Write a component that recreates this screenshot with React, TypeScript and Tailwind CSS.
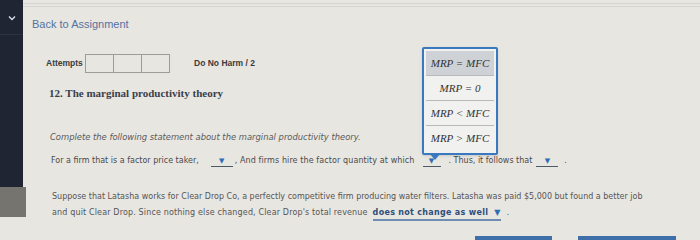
import React from 'react';

const sans = { fontFamily: '"DejaVu Sans", Verdana, sans-serif' };

const Blank = ({ w = 'w-[22px]' }: { w?: string }) => (
  <span className={`inline-flex ${w} h-[10px] items-end justify-center border-b border-[#4d5a6a] align-baseline mx-[2px]`}>
    <span className="text-[#2f6db5] text-[7px] leading-none mb-[1px]">▼</span>
  </span>
);

const options = ['MRP = MFC', 'MRP = 0', 'MRP < MFC', 'MRP > MFC'];

const App = () => {
  return (
    <div className="w-[700px] h-[240px] flex overflow-hidden bg-[#e8e6e1]">
      <aside className="w-[23px] flex flex-col shrink-0">
        <div className="h-[187px] bg-[#1f2532] flex flex-col">
          <div className="h-[35px] border-b border-[#2c3444] flex items-start justify-center pt-[15px]">
            <svg width="8" height="6" viewBox="0 0 8 6" fill="none" stroke="#d8dde6" strokeWidth="1.4">
              <path d="M1 1.5 L4 4.5 L7 1.5" />
            </svg>
          </div>
        </div>
        <div className="h-[30px] w-[26px] bg-[#76746f]" />
      </aside>

      <main className="flex-1 relative pt-[3px]">
        <div className="h-[4px] border-t border-b border-[#d6d5d1]" />
        <div className="pl-[9px] pt-[9px] text-[11px] text-[#54729f]" style={{ fontFamily: '"Liberation Sans", Arial, sans-serif' }}>
          Back to Assignment
        </div>

        <div className="pl-[23px] mt-[21px] flex items-center" style={{ fontFamily: '"Liberation Sans", Arial, sans-serif' }}>
          <span className="text-[8.5px] font-semibold text-[#3b3b3b] w-[39px]">Attempts</span>
          <div className="flex border border-[#9c9c9a] h-[19px]">
            <div className="w-[28px] border-r border-[#9c9c9a]" />
            <div className="w-[28px] border-r border-[#9c9c9a]" />
            <div className="w-[27px]" />
          </div>
          <span className="ml-[24px] text-[8.5px] font-semibold text-[#3b3b3b]">Do No Harm / 2</span>
        </div>

        <div className="pl-[26px] mt-[12px] text-[11px] font-bold text-[#3a3f4a]" style={{ fontFamily: '"Liberation Serif", Georgia, serif' }}>
          12. The marginal productivity theory
        </div>

        <div className="pl-[27px] mt-[30px] text-[8.4px] italic text-[#5a5a5a]" style={sans}>
          Complete the following statement about the marginal productivity theory.
        </div>

        <div className="pl-[28px] mt-[11px] text-[8px] text-[#4a4a4a] flex items-end" style={sans}>
          <span>For a firm that is a factor price taker,</span>
          <span className="ml-[10px]"><Blank /></span>
          <span className="tracking-[0.1px]">, And firms hire the factor quantity at which</span>
          <span className="ml-[6px]"><Blank w="w-[18px]" /></span>
          <span className="ml-[6px]">. Thus, it follows that</span>
          <span className="ml-[2px]"><Blank /></span>
          <span className="ml-[4px]">.</span>
        </div>

        <div className="pl-[29px] mt-[22px] text-[8px] leading-[16px] text-[#555]" style={sans}>
          <div>Suppose that Latasha works for Clear Drop Co, a perfectly competitive firm producing water filters. Latasha was paid $5,000 but found a better job</div>
          <div className="flex items-end">
            <span className="tracking-[0.15px]">and quit Clear Drop. Since nothing else changed, Clear Drop&apos;s total revenue</span>
            <span className="ml-[5px] inline-flex items-center gap-[6px] border-b-2 border-[#6f8cb3] font-bold text-[#2d4e7c] leading-[12px] tracking-[0.3px]">
              does not change as well
              <span className="text-[#2f6db5] text-[8px]">▼</span>
            </span>
            <span className="ml-[6px]">.</span>
          </div>
        </div>

        <div className="absolute left-[452px] top-[236px] flex gap-[26px]">
          <div className="w-[77px] h-[4px] bg-[#3f6fa8]" />
          <div className="w-[98px] h-[4px] bg-[#3f6fa8]" />
        </div>

        <div className="absolute left-[399px] top-[47px] w-[76px] border-2 border-[#3a78c0] rounded-[2px] bg-[#f1f1ef] p-[2px] shadow-sm" style={{ fontFamily: '"Liberation Serif", "Times New Roman", serif' }}>
          {options.map((o, i) => (
            <div
              key={o}
              className={`h-[25px] flex items-center justify-center italic text-[11px] text-[#333] ${i === 0 ? 'bg-[#ced2d6]' : ''} ${i < 3 ? 'border-b border-[#b9b9b9]' : ''}`}
            >
              {o}
            </div>
          ))}
          <div className="absolute left-[6px] -bottom-[7px] w-0 h-0 border-l-[5px] border-r-[5px] border-t-[6px] border-l-transparent border-r-transparent border-t-[#3a78c0]" />
        </div>
      </main>
    </div>
  );
};

export default App;
